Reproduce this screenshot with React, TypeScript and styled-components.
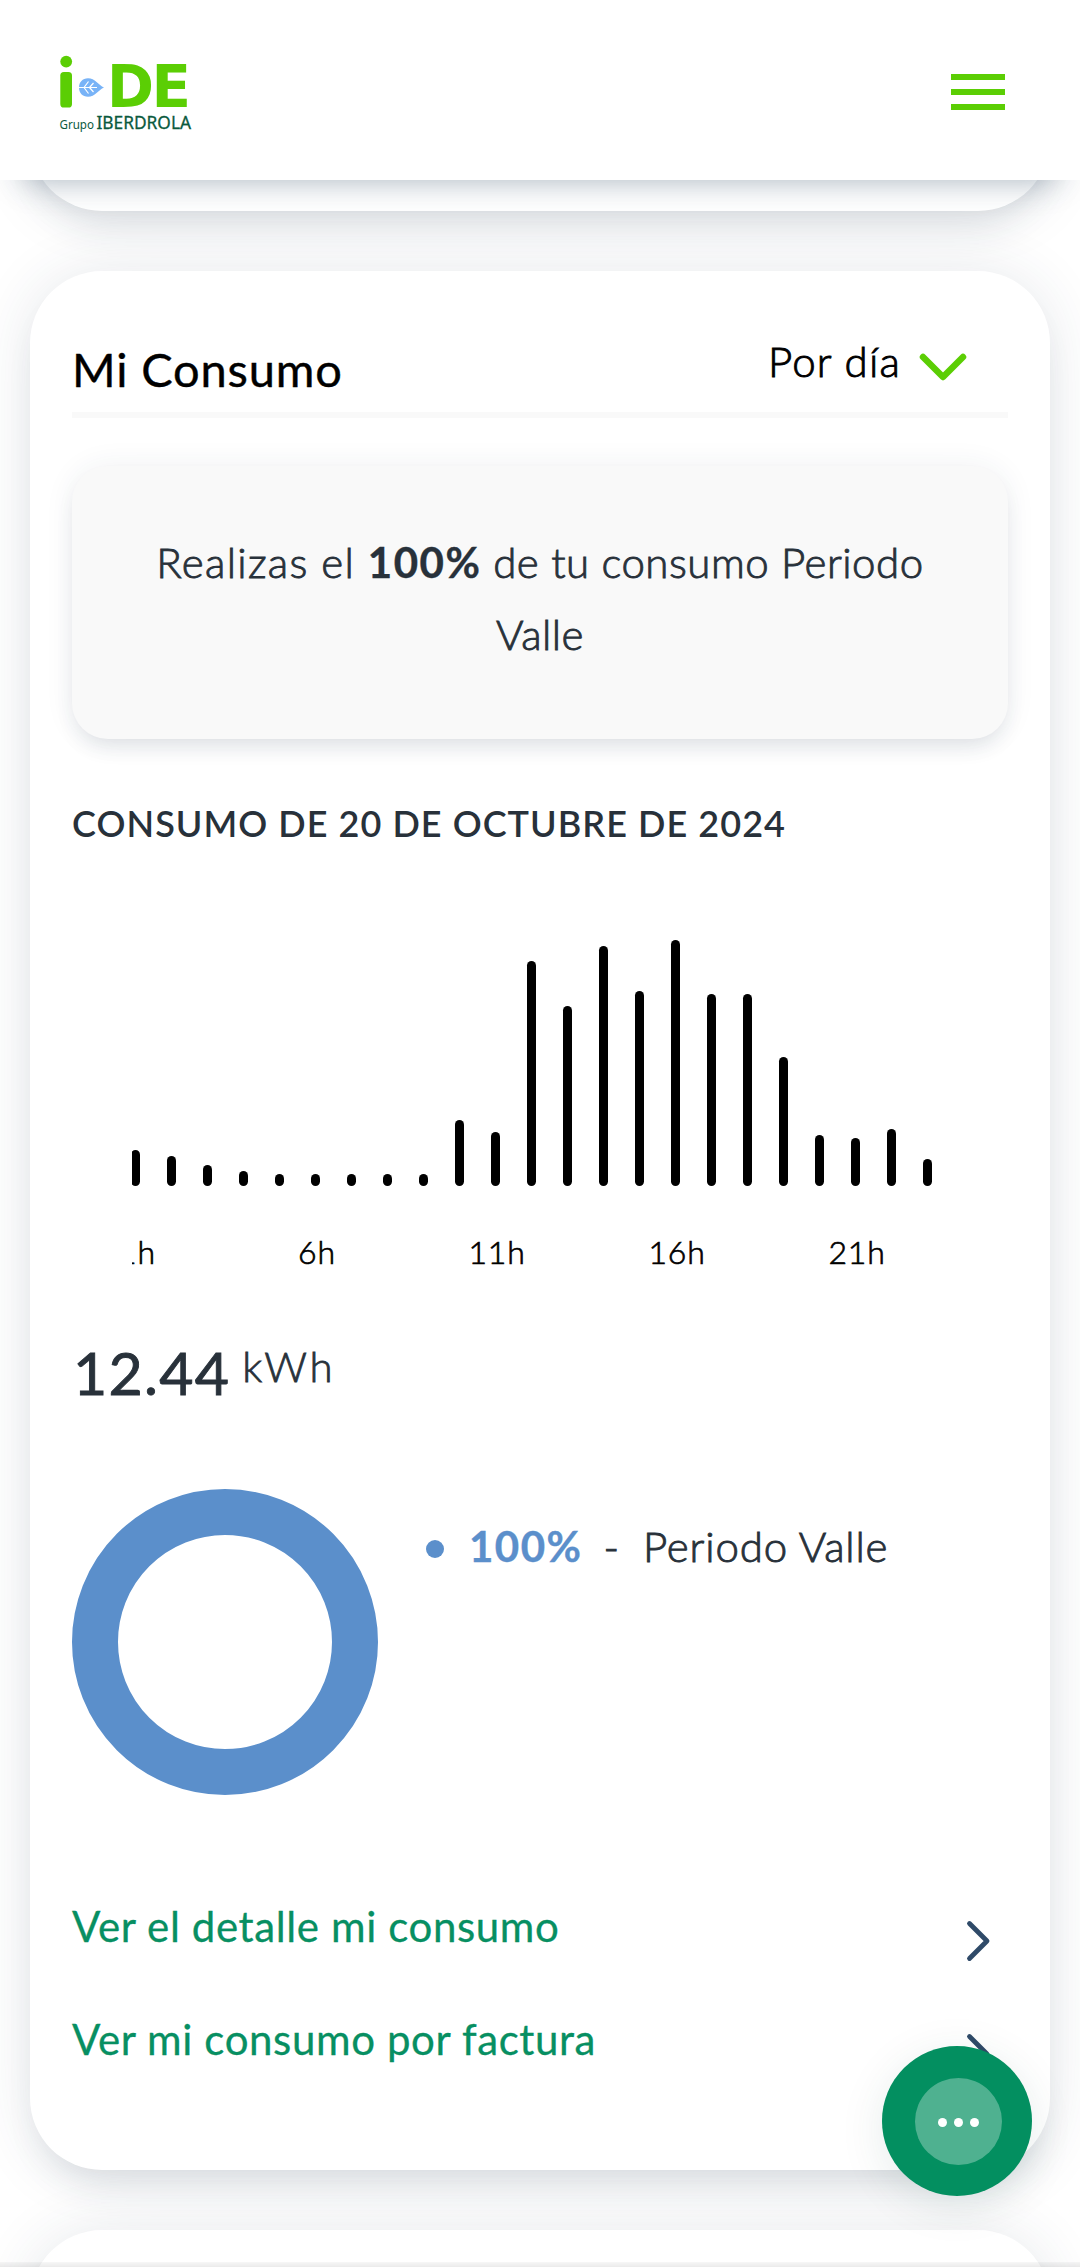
import React from "react";
import styled, { createGlobalStyle } from "styled-components";

const GlobalStyle = createGlobalStyle`
  *, *::before, *::after { box-sizing: border-box; }
  html, body { margin: 0; padding: 0; background: #fff; }
  body { font-family: Lato, "Open Sans", sans-serif; color: #28313a; }
`;

const Page = styled.div`
  width: 1080px;
  height: 2267px;
  overflow: hidden;
  background: #fff;
`;

const TopBar = styled.header`
  position: relative;
  z-index: 2;
  display: flex;
  justify-content: space-between;
  align-items: center;
  height: 180px;
  padding: 0 72px 0 56px;
  background: #fff;
  box-shadow: 0 24px 30px -24px rgba(40, 70, 95, 0.42);

  svg { margin-top: 10px; }
`;

const MenuButton = styled.button`
  display: flex;
  flex-direction: column;
  gap: 9px;
  width: 60px;
  padding: 3px;
  margin-top: 4px;
  border: 0;
  background: none;
`;

const MenuLine = styled.span`
  height: 6px;
  background: #5bce04;
`;

const Cards = styled.main`
  display: flex;
  flex-direction: column;
  gap: 60px;
  padding: 0 30px;
  margin-top: -119px;
`;

const Card = styled.section<{ $height?: number }>`
  flex: none;
  height: ${(p) => (p.$height ? `${p.$height}px` : "auto")};
  padding: 0 42px 101px;
  border-radius: 72px;
  background: #fff;
  box-shadow: 0 24px 36px -14px rgba(40, 60, 85, 0.13), 0 3px 60px rgba(40, 60, 85, 0.12);
`;

const CardHeader = styled.div`
  display: flex;
  justify-content: space-between;
  align-items: flex-end;
  height: 147px;
  padding-bottom: 13px;
  border-bottom: 6px solid #f9f9f9;
`;

const Title = styled.h2`
  margin: 0;
  font-size: 47px;
  font-weight: 400;
  line-height: 60px;
  letter-spacing: 0.85px;
  color: #000;
  -webkit-text-stroke: 0.4px #000;
`;

const PeriodSelect = styled.button`
  display: flex;
  align-items: center;
  gap: 18px;
  padding: 0 41px 0 0;
  margin: 0 0 8px;
  border: 0;
  background: none;
  font: 300 42px/60px Lato, sans-serif;
  letter-spacing: 1.2px;
  color: #000;
  -webkit-text-stroke: 0.9px #000;

  svg { margin-top: 13px; }
`;

const Notice = styled.div`
  height: 273px;
  margin-top: 48px;
  padding: 60px 60px 0;
  border-radius: 36px;
  background: #f9f9f9;
  text-align: center;
  font-size: 42px;
  font-weight: 300;
  line-height: 72px;
  letter-spacing: 0.5px;
  -webkit-text-stroke: 0.9px #28313a;
  box-shadow: 0 12px 21px -6px rgba(40, 60, 85, 0.13), 0 0 30px rgba(40, 60, 85, 0.07);
`;

const Loose = styled.span`
  letter-spacing: 1.3px;
`;

const Share = styled.strong<{ $color?: string }>`
  font-weight: 700;
  letter-spacing: 1.5px;
  color: ${(p) => p.$color ?? "#28313a"};
  -webkit-text-stroke: 0.4px ${(p) => p.$color ?? "#28313a"};
`;

const ChartTitle = styled.h3`
  margin: 57px 0 0;
  font-size: 36px;
  font-weight: 600;
  line-height: 54px;
  letter-spacing: 1.05px;
  white-space: nowrap;
`;

const Chart = styled.div`
  margin: 90px 0 0 60px;
  overflow: hidden;
`;

const Bars = styled.div`
  display: flex;
  align-items: flex-end;
  gap: 27px;
  height: 246px;
  margin-left: -1px;
`;

const Bar = styled.div`
  flex: none;
  width: 9px;
  border-radius: 4.5px;
  background: #000;
`;

const Hours = styled.div`
  display: grid;
  grid-template-columns: repeat(5, 180px);
  margin: 46px 0 0 -85px;
  font-size: 32px;
  font-weight: 300;
  line-height: 40px;
  letter-spacing: 0.8px;
  text-align: center;
  color: #000;
  -webkit-text-stroke: 0.7px #000;
`;

const Total = styled.div`
  display: flex;
  align-items: flex-start;
  gap: 12px;
  margin-top: 65px;
  padding-left: 1px;
  line-height: 72px;
`;

const Amount = styled.span`
  font-size: 59px;
  font-weight: 400;
  letter-spacing: 1.3px;
  -webkit-text-stroke: 0.9px #28313a;
`;

const Unit = styled.span`
  margin-top: -7px;
  font-size: 42px;
  font-weight: 300;
  letter-spacing: 2.6px;
  -webkit-text-stroke: 0.8px #28313a;
`;

const Breakdown = styled.div`
  display: flex;
  align-items: flex-start;
  gap: 48px;
  margin-top: 80px;
`;

const Donut = styled.div`
  width: 306px;
  height: 306px;
  border: 46px solid #5b8fcb;
  border-radius: 50%;
`;

const Legend = styled.div`
  display: flex;
  align-items: center;
  margin-top: 27px;
  font-size: 42px;
  font-weight: 300;
  line-height: 60px;
  letter-spacing: 0.85px;
  -webkit-text-stroke: 0.9px #28313a;
`;

const Dot = styled.span`
  width: 18px;
  height: 18px;
  margin: 6px 25px 0 0;
  border-radius: 50%;
  background: #5b8fcb;
`;

const Dash = styled.span`
  margin: 0 23px 0 21px;
`;

const Links = styled.nav`
  display: flex;
  flex-direction: column;
  gap: 53px;
  margin-top: 101px;
`;

const LinkRow = styled.a`
  display: flex;
  justify-content: space-between;
  align-items: flex-start;
  height: 60px;
  padding-right: 16px;
  font-size: 42px;
  line-height: 60px;
  letter-spacing: 0.62px;
  color: #078f62;
  text-decoration: none;
  -webkit-text-stroke: 0.3px #078f62;

  svg { margin-top: 24px; }
`;

const ChatButton = styled.button`
  position: fixed;
  z-index: 3;
  left: 882px;
  top: 2046px;
  display: flex;
  align-items: center;
  justify-content: center;
  width: 150px;
  height: 150px;
  padding: 1px 0 0 3px;
  border: 0;
  border-radius: 50%;
  background: #038f60;
  box-shadow: 0 9px 45px rgba(0, 70, 60, 0.1);
`;

const Bubble = styled.span`
  display: flex;
  align-items: center;
  justify-content: center;
  gap: 7px;
  width: 87px;
  height: 87px;
  padding-top: 2px;
  border-radius: 50%;
  background: #4fb190;
`;

const BubbleDot = styled.span`
  width: 9px;
  height: 9px;
  border-radius: 50%;
  background: #fff;
`;

const BottomEdge = styled.div`
  position: fixed;
  z-index: 4;
  left: 0;
  top: 2262px;
  width: 1080px;
  height: 5px;
  background: linear-gradient(rgba(0, 0, 0, 0.03), rgba(0, 0, 0, 0.08));
`;

const HOURLY = [36, 30, 21, 15, 12, 12, 12, 12, 12, 66, 54, 225, 180, 240, 195, 246, 192, 192, 129, 51, 48, 57, 27];

const Logo = () => (
  <svg width="140" height="90" viewBox="56 50 140 90" role="img" aria-label="i-DE Grupo Iberdrola">
    <circle cx="66.2" cy="61.6" r="5.9" fill="#5bce04" />
    <rect x="60.3" y="72" width="11.7" height="35.5" rx="3.6" fill="#5bce04" />
    <path d="M104 87.500C98.500 90 95 96.800 88 96.800C82.500 96.800 79 92.800 79 87.500C79 82.200 82.500 78.200 88 78.200C95 78.200 98.500 85 104 87.500Z" fill="#78b3f7" />
    <path d="M79 87.500H97M84 87.500l4.500-6M89.500 87.500l4-4.500M84 87.500l4.500 6M89.500 87.500l4 4.500" stroke="#fff" strokeWidth="1.2" fill="none" />
    <text x="107" y="106.800" fontFamily="DejaVu Sans" fontWeight="700" fontSize="59" fill="#5bce04" textLength="47" lengthAdjust="spacingAndGlyphs">D</text>
    <text x="151.500" y="106.800" fontFamily="DejaVu Sans" fontWeight="700" fontSize="59" fill="#5bce04" textLength="39.500" lengthAdjust="spacingAndGlyphs">E</text>
    <text x="59.500" y="129" fontFamily="Noto Sans" fontSize="12.500" fontWeight="400" fill="#0b5a3e" textLength="34.500" lengthAdjust="spacingAndGlyphs">Grupo</text>
    <text x="96.500" y="129" fontFamily="Noto Sans" fontSize="17.500" fontWeight="400" fill="#0b5a3e" stroke="#0b5a3e" strokeWidth="0.3" textLength="94.500" lengthAdjust="spacingAndGlyphs">IBERDROLA</text>
  </svg>
);

const ChevronDown = () => (
  <svg width="48" height="30" viewBox="0 0 48 30" fill="none">
    <path d="M4 4L24 24L44 4" stroke="#5bce04" strokeWidth="6.500" strokeLinecap="round" strokeLinejoin="round" />
  </svg>
);

const ChevronRight = () => (
  <svg width="27" height="42" viewBox="0 0 27 42" fill="none">
    <path d="M4.500 3.500L22 21L4.500 38.500" stroke="#2f4a68" strokeWidth="4.800" strokeLinecap="round" strokeLinejoin="round" />
  </svg>
);

export default function App() {
  return (
    <Page>
      <GlobalStyle />
      <TopBar>
        <Logo />
        <MenuButton aria-label="Menú">
          <MenuLine />
          <MenuLine />
          <MenuLine />
        </MenuButton>
      </TopBar>
      <Cards>
        <Card $height={150} />
        <Card>
          <CardHeader>
            <Title>Mi Consumo</Title>
            <PeriodSelect>
              Por día
              <ChevronDown />
            </PeriodSelect>
          </CardHeader>
          <Notice>
            <Loose>Realizas el </Loose>
            <Share>100%</Share> de tu consumo Periodo Valle
          </Notice>
          <ChartTitle>CONSUMO DE 20 DE OCTUBRE DE 2024</ChartTitle>
          <Chart>
            <Bars>
              {HOURLY.map((height, i) => (
                <Bar key={i} style={{ height }} />
              ))}
            </Bars>
            <Hours>
              {["1h", "6h", "11h", "16h", "21h"].map((hour) => (
                <span key={hour}>{hour}</span>
              ))}
            </Hours>
          </Chart>
          <Total>
            <Amount>12.44</Amount>
            <Unit>kWh</Unit>
          </Total>
          <Breakdown>
            <Donut />
            <Legend>
              <Dot />
              <Share $color="#5b8fcb">100%</Share>
              <Dash>-</Dash>
              <span>Periodo Valle</span>
            </Legend>
          </Breakdown>
          <Links>
            <LinkRow>
              Ver el detalle mi consumo
              <ChevronRight />
            </LinkRow>
            <LinkRow>
              Ver mi consumo por factura
              <ChevronRight />
            </LinkRow>
          </Links>
        </Card>
        <Card $height={300} />
      </Cards>
      <ChatButton aria-label="Chat">
        <Bubble>
          <BubbleDot />
          <BubbleDot />
          <BubbleDot />
        </Bubble>
      </ChatButton>
      <BottomEdge />
    </Page>
  );
}
